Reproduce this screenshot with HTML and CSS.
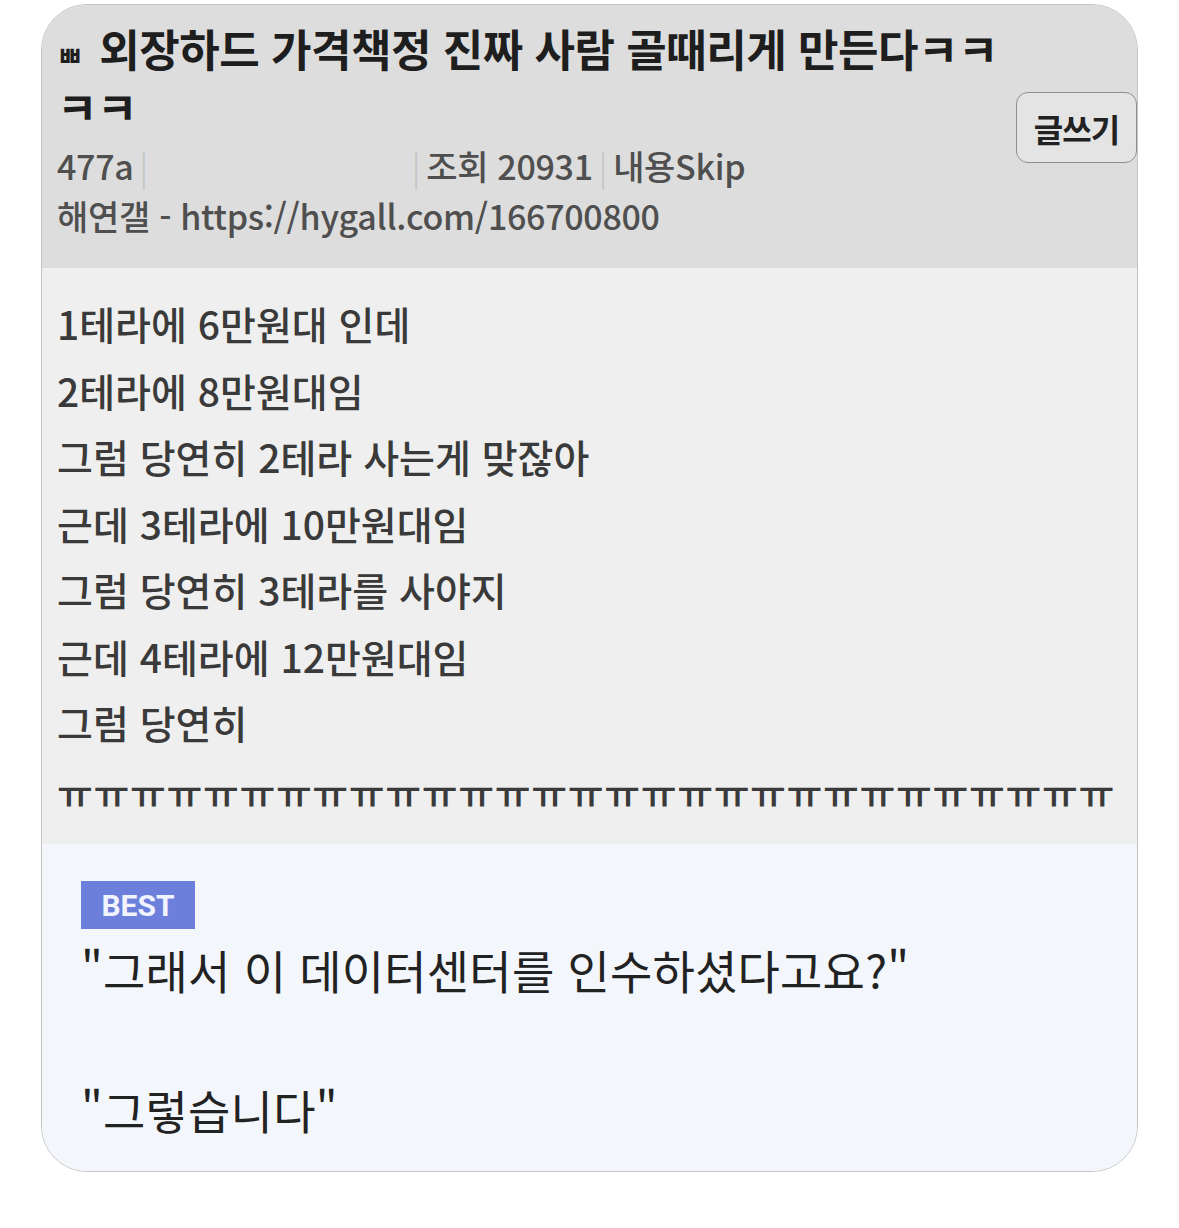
FILE: index.html
```html
<!DOCTYPE html>
<html lang="ko">
<head>
<meta charset="utf-8">
<link rel="stylesheet" href="styles.css">
</head>
<body>
<div class="card">
  <header class="head">
    <div class="head-main">
      <h1 class="title"><span class="jamo">ㅃ</span><span class="title-line">외장하드 가격책정 진짜 사람 골때리게 만든다ㅋㅋ</span><br><span>ㅋㅋ</span></h1>
      <div class="meta meta-first"><span>477a</span><span class="sep">|</span><span class="hidden-name"></span><span class="sep">|</span><span>조회 20931</span><span class="sep">|</span><span>내용Skip</span></div>
      <div class="meta">해연갤 - https://hygall.com/166700800</div>
    </div>
    <div class="write-btn">글쓰기</div>
  </header>
  <section class="post">
    <p>1테라에 6만원대 인데</p>
    <p>2테라에 8만원대임</p>
    <p>그럼 당연히 2테라 사는게 맞잖아</p>
    <p>근데 3테라에 10만원대임</p>
    <p>그럼 당연히 3테라를 사야지</p>
    <p>근데 4테라에 12만원대임</p>
    <p>그럼 당연히</p>
    <p class="cry">ㅠㅠㅠㅠㅠㅠㅠㅠㅠㅠㅠㅠㅠㅠㅠㅠㅠㅠㅠㅠㅠㅠㅠㅠㅠㅠㅠㅠㅠ</p>
  </section>
  <section class="best">
    <div class="badge">BEST</div>
    <p class="quote">"그래서 이 데이터센터를 인수하셨다고요?"</p>
    <p class="quote">&nbsp;</p>
    <p class="quote">"그렇습니다"</p>
  </section>
</div>
</body>
</html>
```
FILE: styles.css
```css
html, body {
  margin: 0;
  padding: 0;
  background: #ffffff;
}
body {
  font-family: "Noto Sans CJK KR", "Noto Sans", sans-serif;
  color: #333;
}
.card {
  margin: 4px 0 0 41px;
  width: 1097px;
  height: 1168px;
  box-sizing: border-box;
  border: 1.5px solid #c4c4c4;
  border-radius: 46px;
  overflow: hidden;
  display: flex;
  flex-direction: column;
}
.head {
  background: #dddddd;
  height: 263px;
  flex: none;
  display: flex;
  padding-left: 15px;
  box-sizing: border-box;
}
.head-main {
  flex: 1;
  min-width: 0;
  padding-top: 14px;
}
.title {
  margin: 0;
  font-size: 44px;
  font-weight: 700;
  line-height: 58px;
  color: #1e1e1e;
  letter-spacing: -0.5px;
  width: 960px;
  white-space: nowrap;
}
.jamo {
  font-size: 28px;
  line-height: 1;
  margin-right: 17px;
}
.meta {
  font-size: 34px;
  line-height: 50px;
  color: #4f4f4f;
  font-weight: 500;
  display: flex;
  letter-spacing: -0.3px;
}
.meta-first {
  margin-top: 6px;
}
.sep {
  color: #c4c4c4;
  margin: 0 6px;
  font-weight: 300;
}
.hidden-name {
  width: 252px;
}
.write-btn {
  flex: none;
  align-self: flex-start;
  margin-top: 87px;
  width: 121px;
  height: 71px;
  box-sizing: border-box;
  border: 1.5px solid #8e8e8e;
  border-radius: 12px;
  background: #e4e4e4;
  font-size: 32px;
  font-weight: 700;
  color: #222;
  display: flex;
  align-items: center;
  justify-content: center;
  letter-spacing: -1px;
}
.post {
  background: #efefef;
  height: 576px;
  flex: none;
  box-sizing: border-box;
  padding: 22px 0 0 15px;
}
.post p {
  margin: 0;
  font-size: 39px;
  line-height: 66.5px;
  color: #3a3a3a;
  font-weight: 500;
}
.post p.cry {
  margin-top: 2px;
  letter-spacing: 0.6px;
  white-space: nowrap;
}
.best {
  flex: 1;
  background: #f3f6fa;
  padding: 37px 0 0 39px;
}
.badge {
  width: 114px;
  height: 48px;
  background: #6b7fdb;
  color: #f1f3ff;
  font-family: "Roboto", "Noto Sans", sans-serif;
  font-weight: 700;
  font-size: 30px;
  display: flex;
  align-items: center;
  justify-content: center;
  margin-bottom: 5px;
}
.quote {
  margin: 0;
  font-size: 46px;
  line-height: 70px;
  color: #222;
  letter-spacing: 0.2px;
}
```
